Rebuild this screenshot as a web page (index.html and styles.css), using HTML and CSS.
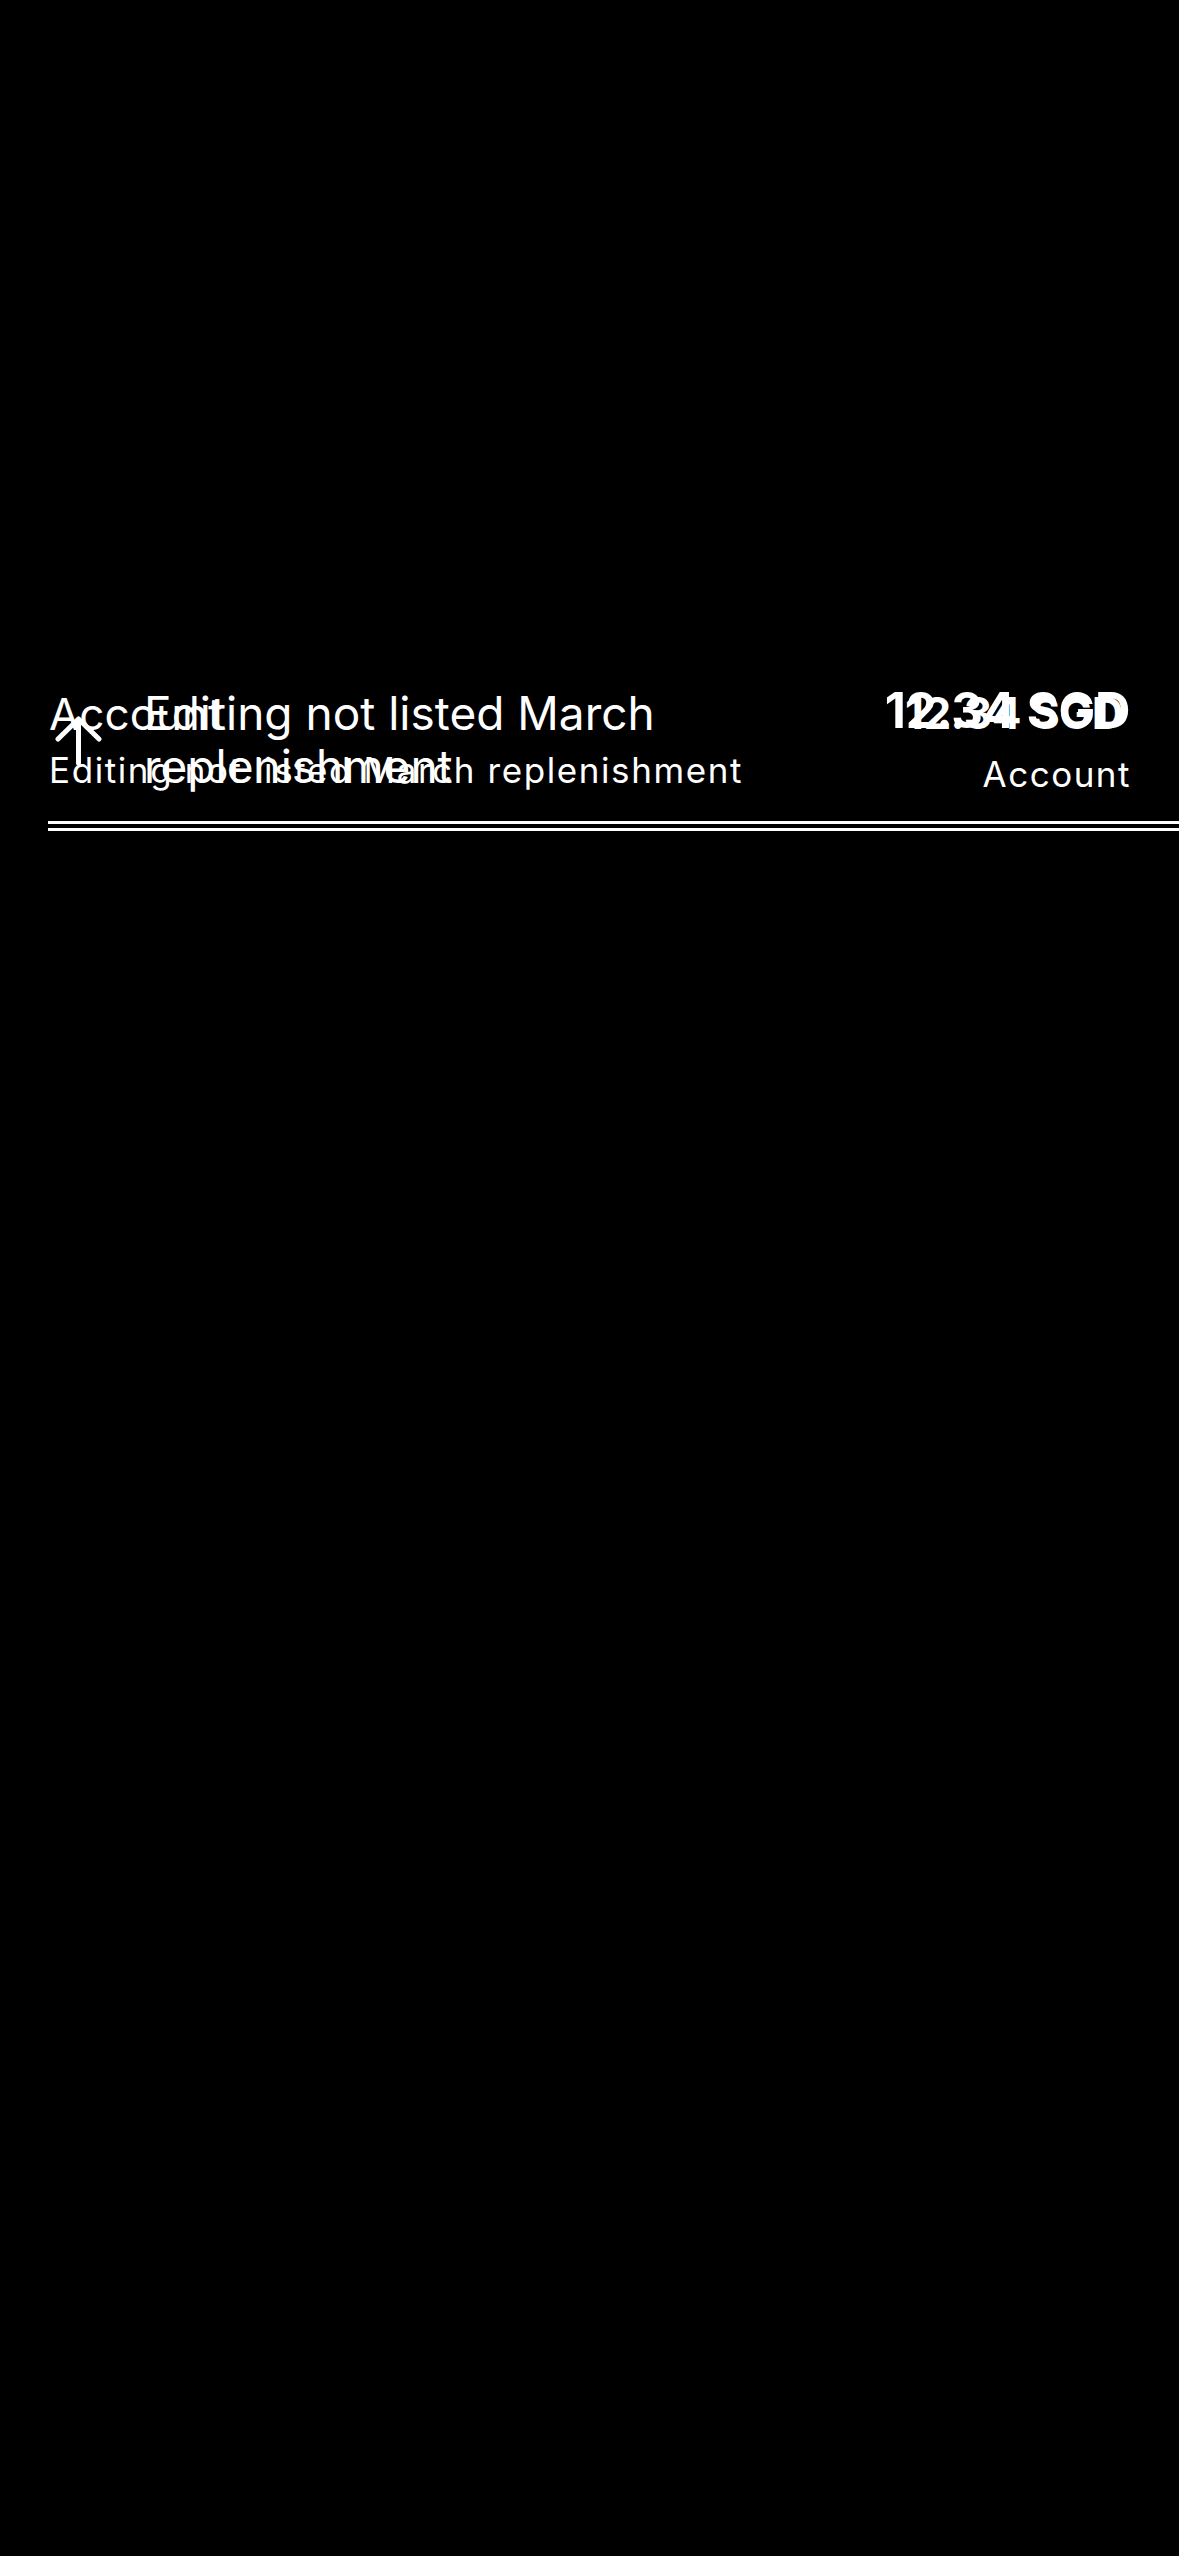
FILE: index.html
```html
<!DOCTYPE html>
<html lang="en">
<head>
<meta charset="utf-8">
<title>Account</title>
<link rel="stylesheet" href="styles.css">
</head>
<body>
<main class="screen">
  <div class="stack">
    <section class="layer layer-a">
      <div class="row">
        <div class="col-left">
          <div class="a-title">Account</div>
          <div class="a-sub">Editing not listed March replenishment</div>
        </div>
        <div class="col-right">
          <div class="a-amount">12.34 SGD</div>
          <div class="a-label">Account</div>
        </div>
      </div>
      <div class="rule rule-a"></div>
    </section>
    <section class="layer layer-b">
      <div class="row">
        <svg class="arrow" width="56" height="52" viewBox="0 0 56 52" aria-hidden="true">
          <path d="M30.5 6 L30.5 50 M10 26 L30.5 6 L51 26" fill="none" stroke="#fff" stroke-width="5" stroke-linecap="round" stroke-linejoin="round"/>
        </svg>
        <div class="b-title">Editing not listed March replenishment</div>
        <div class="b-amount">12.34 SGD</div>
      </div>
      <div class="rule rule-b"></div>
    </section>
  </div>
</main>
</body>
</html>
```

FILE: styles.css
```css
html, body {
  margin: 0;
  padding: 0;
  background: #000;
}

body {
  width: 1179px;
  height: 2556px;
  color: #fff;
  font-family: Inter, "Noto Sans", "Liberation Sans", sans-serif;
  overflow: hidden;
}

.screen {
  padding-top: 680px;
}

.stack {
  display: grid;
}

.layer {
  grid-area: 1 / 1;
  display: flex;
  flex-direction: column;
}

.row {
  display: flex;
  align-items: flex-start;
  padding-left: 48px;
}

/* Layer A */
.layer-a .row {
  padding-right: 49px;
  height: 130px;
}

.col-left {
  flex: 1;
  padding-top: 8px;
  padding-left: 1px;
}

.a-title {
  font-size: 44px;
  line-height: 52px;
  font-weight: 400;
}

.a-sub {
  margin-top: 8px;
  font-size: 35px;
  line-height: 44px;
  font-weight: 400;
  letter-spacing: 1.6px;
}

.col-right {
  display: flex;
  flex-direction: column;
  align-items: flex-end;
  padding-top: 6px;
}

.a-amount {
  font-size: 49px;
  line-height: 50px;
  font-weight: 700;
  letter-spacing: -0.3px;
}

.a-label {
  margin-top: 16px;
  font-size: 35px;
  line-height: 44px;
  letter-spacing: 1.5px;
  margin-right: -1px;
}

/* Layer B */
.layer-b .row {
  padding-right: 56px;
  height: 137px;
}

.arrow {
  flex: none;
  margin-top: 33px;
}

.b-title {
  flex: none;
  width: 560px;
  margin-left: 40px;
  padding-top: 7px;
  font-size: 46px;
  line-height: 53px;
  font-weight: 400;
}

.b-amount {
  margin-left: auto;
  padding-top: 11px;
  font-size: 44px;
  line-height: 45px;
  font-weight: 700;
  letter-spacing: -0.5px;
}

/* Separators */
.rule {
  height: 3px;
  background: #fff;
  margin-left: 48px;
}

.rule-a {
  margin-top: 11px;
}

.rule-b {
  margin-top: 11px;
}
```
